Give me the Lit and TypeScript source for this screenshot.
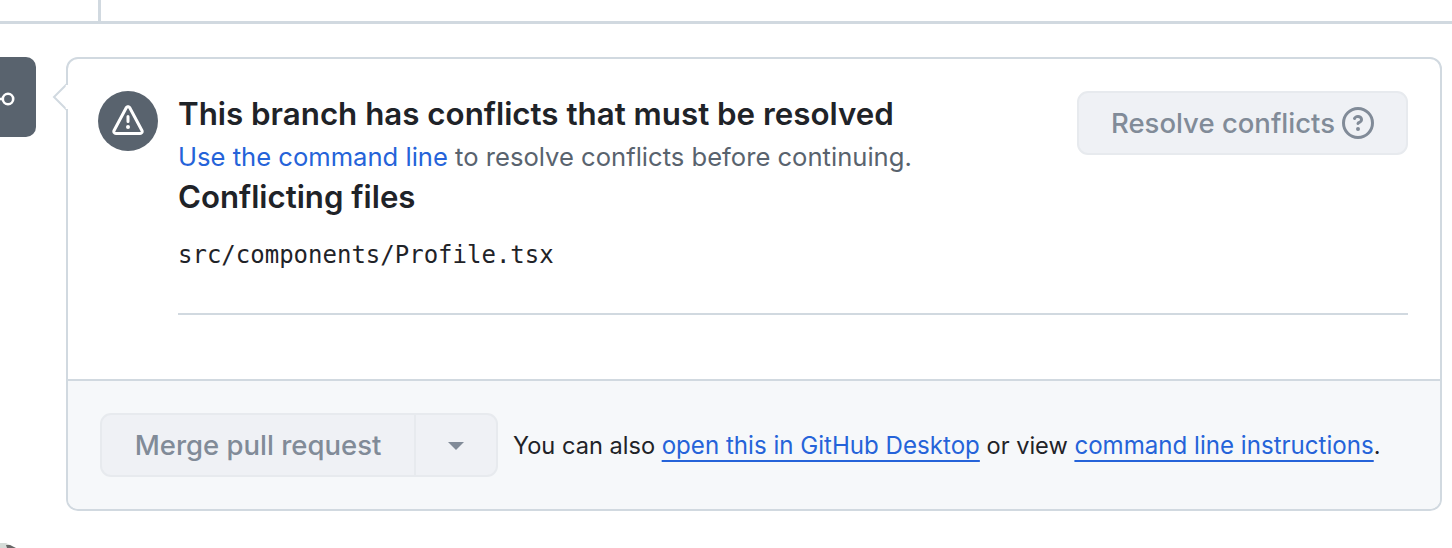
import { LitElement, html, css } from "lit";
import { customElement } from "lit/decorators.js";

@customElement("app-root")
export class AppRoot extends LitElement {
  static styles = css`
    :host { display: block; position: relative; width: 1452px; height: 548px; overflow: hidden; background: #fff; font-family: Inter, "Liberation Sans", sans-serif; color: #1f2328; }
    * { box-sizing: border-box; }
    .top { height: 24px; border-bottom: 3px solid #d1d9e0; padding-left: 98px; }
    .top i { display: block; width: 3px; height: 21px; background: #d1d9e0; }
    .main { display: flex; gap: 30px; padding-top: 33px; }
    .badge { flex: none; width: 36px; height: 80px; background: #59636e; border-radius: 0 10px 10px 0; display: flex; align-items: center; justify-content: flex-end; overflow: hidden; padding-top: 4px; padding-right: 20px; }
    .badge svg { display: block; flex: none; }
    .card { position: relative; width: 1376px; height: 454px; border: 2px solid #d1d9e0; border-radius: 12px; display: flex; flex-direction: column; }
    .caret { position: absolute; left: -17px; top: 18px; display: block; }
    .body { flex: 1; display: flex; padding: 32px 32px 0 30px; min-height: 0; }
    .round { flex: none; width: 60px; height: 60px; border-radius: 50%; background: #59636e; display: flex; align-items: center; justify-content: center; }
    .content { flex: 1; margin-left: 20px; min-width: 0; }
    .head { display: flex; justify-content: space-between; align-items: flex-start; }
    h3 { margin: 0; font-size: 31.3px; line-height: 46px; font-weight: 600; color: #1f2328; white-space: nowrap; }
    .sub { font-size: 25.6px; line-height: 38px; margin-bottom: -1px; padding-top: 1px; color: #59636e; white-space: nowrap; }
    a { color: #2563d9; text-decoration: none; }
    .btn { flex: none; width: 331px; height: 64px; border: 2px solid #e7eaee; background: #eff1f5; border-radius: 11px; color: #818b98; font-size: 27.5px; font-weight: 500; display: flex; align-items: center; justify-content: center; gap: 8px; }
    .btn svg { display: block; margin-left: -1px; }
    h4 { margin: 0; font-size: 31.2px; line-height: 44px; font-weight: 600; color: #1f2328; }
    .file { font-family: "DejaVu Sans Mono", monospace; font-size: 24px; line-height: 36px; margin-top: 18px; color: #1f2328; }
    .rule { height: 2px; background: #d1d9e0; margin-top: 40px; }
    .foot { flex: none; height: 130px; border-top: 2px solid #d1d9e0; background: #f6f8fa; border-radius: 0 0 10px 10px; padding: 32px 0 0 32px; display: flex; align-items: flex-start; }
    .merge { flex: none; width: 398px; height: 64px; display: flex; border: 2px solid #e7eaee; background: #eff1f5; border-radius: 11px; color: #818b98; font-size: 27.5px; font-weight: 500; }
    .merge .l { width: 314px; border-right: 2px solid #e7eaee; display: flex; align-items: center; justify-content: center; }
    .merge .r { flex: 1; display: flex; align-items: center; justify-content: center; padding-top: 2px; }
    .note { margin-left: 15px; padding-top: 1px; font-size: 23.6px; line-height: 64px; color: #1f2328; white-space: nowrap; }
    .note a { font-size: 24.1px; text-decoration: underline; text-decoration-thickness: 2px; text-underline-offset: 6px; }
    .cursor { position: absolute; left: 0; top: 542px; display: block; }
  `;

  render() {
    return html`
      <div class="top"><i></i></div>
      <div class="main">
        <div class="badge">
          <svg width="32" height="32" viewBox="0 0 32 32" fill="none" stroke="#fff" stroke-width="2.6"><circle cx="24" cy="16" r="5.2"></circle><path d="M0 16H19"></path></svg>
        </div>
        <div class="card">
          <svg class="caret" width="18" height="40" viewBox="0 0 18 40"><path d="M16 7 L3 20 L16 33" fill="#fff" stroke="#d1d9e0" stroke-width="2"></path><path d="M16 8V32" stroke="#fff" stroke-width="2.5"></path></svg>
          <div class="body">
            <div class="round">
              <svg width="32" height="32" viewBox="0 0 16 16" fill="#fff"><path d="M6.457 1.047c.659-1.234 2.427-1.234 3.086 0l6.082 11.378A1.75 1.75 0 0 1 14.082 15H1.918a1.75 1.75 0 0 1-1.543-2.575Zm1.763.707a.25.25 0 0 0-.44 0L1.698 13.132a.25.25 0 0 0 .22.368h12.164a.25.25 0 0 0 .22-.368Zm.53 3.996v2.5a.75.75 0 0 1-1.5 0v-2.5a.75.75 0 0 1 1.5 0ZM9 11a1 1 0 1 1-2 0 1 1 0 0 1 2 0Z"></path></svg>
            </div>
            <div class="content">
              <div class="head">
                <div>
                  <h3>This branch has conflicts that must be resolved</h3>
                  <div class="sub"><a>Use the command line</a> to resolve conflicts before continuing.</div>
                </div>
                <div class="btn">Resolve conflicts
                  <svg width="32" height="32" viewBox="0 0 16 16" fill="#818b98"><path d="M0 8a8 8 0 1 1 16 0A8 8 0 0 1 0 8Zm8-6.5a6.5 6.5 0 1 0 0 13 6.5 6.5 0 0 0 0-13ZM6.92 6.085h.001a.749.749 0 1 1-1.342-.67c.169-.339.436-.701.849-.977C6.845 4.16 7.369 4 8 4a2.756 2.756 0 0 1 1.637.525c.503.377.863.965.863 1.725 0 .448-.115.83-.329 1.15-.205.307-.47.513-.692.662-.109.072-.22.138-.313.195l-.006.004a6.24 6.24 0 0 0-.26.16.952.952 0 0 0-.276.245.75.75 0 0 1-1.248-.832c.184-.264.42-.489.692-.661.103-.067.207-.132.313-.195l.007-.004c.1-.061.182-.11.258-.161a.969.969 0 0 0 .277-.245C8.96 6.514 9 6.427 9 6.25a.612.612 0 0 0-.262-.525A1.27 1.27 0 0 0 8 5.5c-.369 0-.595.09-.74.187a1.01 1.01 0 0 0-.34.398ZM9 11a1 1 0 1 1-2 0 1 1 0 0 1 2 0Z"></path></svg>
                </div>
              </div>
              <h4>Conflicting files</h4>
              <div class="file">src/components/Profile.tsx</div>
              <div class="rule"></div>
            </div>
          </div>
          <div class="foot">
            <div class="merge">
              <div class="l">Merge pull request</div>
              <div class="r"><svg width="16" height="8" viewBox="0 0 16 8"><path d="M0 0H16L8 8Z" fill="#818b98"></path></svg></div>
            </div>
            <div class="note">You can also <a>open this in GitHub Desktop</a> or view <a>command line instructions</a>.</div>
          </div>
        </div>
      </div>
      <svg class="cursor" width="20" height="6" viewBox="0 0 20 6"><path d="M0 1 L6 1 L12 4 L8 6 H0Z" fill="#d5dcd8"></path><path d="M6 3 L10 3 L16 6 H7Z" fill="#666"></path></svg>
    `;
  }
}
